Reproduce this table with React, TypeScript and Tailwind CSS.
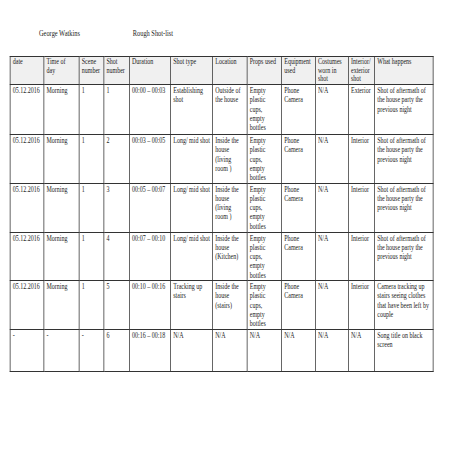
const cols = [45, 47, 33, 34, 55, 56, 46, 46, 45, 44, 35, 78];

const header: string[][] = [
  ["date"],
  ["Time of", "day"],
  ["Scene", "number"],
  ["Shot", "number"],
  ["Duration"],
  ["Shot type"],
  ["Location"],
  ["Props used"],
  ["Equipment", "used"],
  ["Costumes", "worn in", "shot"],
  ["Interior/", "exterior", "shot"],
  ["What happens"],
];

const props = ["Empty", "plastic", "cups,", "empty", "bottles"];
const aftermath = ["Shot of aftermath of", "the house party the", "previous night"];

const rows: { h: string; cells: string[][] }[] = [
  {
    h: "h-[50px]",
    cells: [
      ["05.12.2016"], ["Morning"], ["1"], ["1"], ["00:00 – 00:03"],
      ["Establishing", "shot"], ["Outside of", "the house"], props,
      ["Phone", "Camera"], ["N/A"], ["Exterior"], aftermath,
    ],
  },
  {
    h: "h-[48px]",
    cells: [
      ["05.12.2016"], ["Morning"], ["1"], ["2"], ["00:03 – 00:05"],
      ["Long/ mid shot"], ["Inside the", "house", "(living", "room )"], props,
      ["Phone", "Camera"], ["N/A"], ["Interior"], aftermath,
    ],
  },
  {
    h: "h-[49px]",
    cells: [
      ["05.12.2016"], ["Morning"], ["1"], ["3"], ["00:05 – 00:07"],
      ["Long/ mid shot"], ["Inside the", "house", "(living", "room )"], props,
      ["Phone", "Camera"], ["N/A"], ["Interior"], aftermath,
    ],
  },
  {
    h: "h-[48px]",
    cells: [
      ["05.12.2016"], ["Morning"], ["1"], ["4"], ["00:07 – 00:10"],
      ["Long/ mid shot"], ["Inside the", "house", "(Kitchen)"], props,
      ["Phone", "Camera"], ["N/A"], ["Interior"], aftermath,
    ],
  },
  {
    h: "h-[49px]",
    cells: [
      ["05.12.2016"], ["Morning"], ["1"], ["5"], ["00:10 – 00:16"],
      ["Tracking up", "stairs"], ["Inside the", "house", "(stairs)"], props,
      ["Phone", "Camera"], ["N/A"], ["Interior"],
      ["Camera tracking up", "stairs seeing clothes", "that have been left by", "couple"],
    ],
  },
  {
    h: "h-[42px]",
    cells: [
      ["-"], ["-"], ["-"], ["6"], ["00:16 – 00:18"],
      ["N/A"], ["N/A"], ["N/A"], ["N/A"], ["N/A"], ["N/A"],
      ["Song title on black", "screen"],
    ],
  },
];

function Cell({ lines, tight }: { lines: string[]; tight?: boolean }) {
  return (
    <td className="border border-[#333] align-top px-[3px] pt-[1px] pb-0">
      {lines.map((l, i) => (
        <div
          key={i}
          className={tight ? "whitespace-nowrap leading-[8.7px]" : "whitespace-nowrap leading-[9.3px]"}
        >
          {l}
        </div>
      ))}
    </td>
  );
}

export default function App() {
  return (
    <div className="w-[453px] h-[453px] bg-white overflow-hidden">
      <div className="w-[604px] origin-top-left scale-x-75 font-['Liberation_Serif',serif] text-[#222]">
        <div className="flex pt-[28px] text-[8.5px] leading-[10px]">
          <span className="pl-[52px] w-[177px]">George Watkins</span>
          <span>Rough Shot-list</span>
        </div>
        <table className="ml-[13px] mt-[18px] border-collapse table-fixed w-[564px] text-[8px]">
          <colgroup>
            {cols.map((w, i) => (
              <col key={i} style={{ width: w }} />
            ))}
          </colgroup>
          <tbody>
            <tr className="h-[28px] bg-[#f0f0f0]">
              {header.map((c, i) => (
                <Cell key={i} lines={c} tight />
              ))}
            </tr>
            {rows.map((r, i) => (
              <tr key={i} className={r.h}>
                {r.cells.map((c, j) => (
                  <Cell key={j} lines={c} />
                ))}
              </tr>
            ))}
          </tbody>
        </table>
      </div>
    </div>
  );
}
